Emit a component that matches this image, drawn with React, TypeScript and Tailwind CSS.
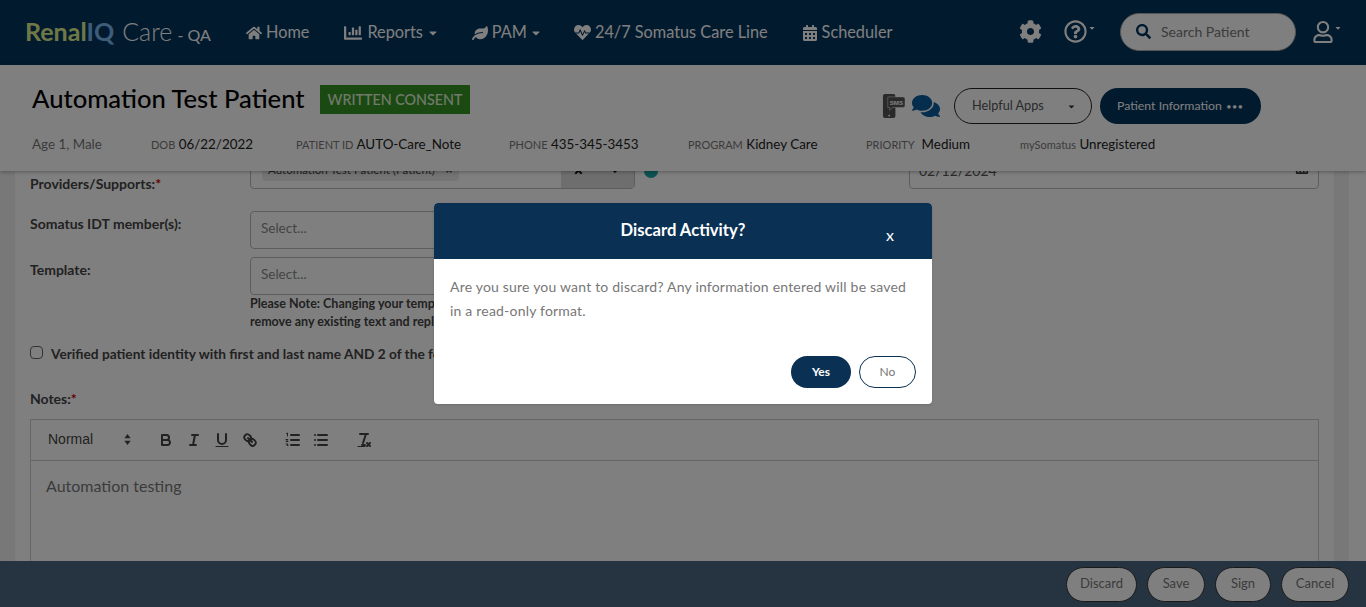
import type { ReactNode } from "react";
import {
  FaCalendarAlt,
  FaCaretDown,
  FaChartBar,
  FaCog,
  FaComments,
  FaHeartbeat,
  FaHome,
  FaLeaf,
  FaRegQuestionCircle,
  FaRegUser,
  FaSearch,
  FaTimes,
} from "react-icons/fa";

const BODY_FONT = "font-['Lato','Noto_Sans',sans-serif]";

function Caret() {
  return <FaCaretDown className="-ml-[1px] h-3 w-3" />;
}

function Header() {
  return (
    <header className="flex h-[65px] shrink-0 items-center bg-[#03345c] pb-[2px] pl-[25px] text-white">
      <div className="flex w-[221px] items-baseline whitespace-nowrap">
        <span className="text-[25px] font-bold text-[#dff08c]">Renal</span>
        <span className="text-[25px] font-bold text-[#7ab8f5]">IQ</span>
        <span className="ml-[8px] text-[25px] font-light">Care</span>
        <span className="ml-[5px] text-[16px]">- QA</span>
      </div>
      <nav className="mt-[2px] flex items-center text-[16.3px]">
        <a className="flex items-center gap-[4px]">
          <FaHome className="h-4 w-4" /> Home
        </a>
        <a className="ml-[35px] flex items-center gap-[5px]">
          <FaChartBar className="h-[18px] w-[18px]" /> Reports <Caret />
        </a>
        <a className="ml-[33px] flex items-center gap-[4px]">
          <FaLeaf className="h-4 w-4" /> PAM <Caret />
        </a>
        <a className="ml-[32px] flex items-center gap-[4px]">
          <FaHeartbeat className="h-[17px] w-[17px]" /> 24/7 Somatus Care Line
        </a>
        <a className="ml-[34px] flex items-center gap-[4px]">
          <FaCalendarAlt className="h-4 w-4" /> Scheduler
        </a>
      </nav>
      <div className="ml-auto flex items-center pr-[24px]">
        <FaCog className="h-[23px] w-[23px]" />
        <FaRegQuestionCircle className="ml-[22px] h-[23px] w-[23px]" />
        <FaCaretDown className="mb-2 ml-[1px] h-2 w-2" />
        <div className="ml-[24px] flex h-[38px] w-[176px] items-center rounded-full border border-[#aaa] bg-white pl-[15px]">
          <FaSearch className="h-[15px] w-[15px] text-[#03345c]" />
          <span className="ml-[10px] text-[14px] text-[#777]">Search Patient</span>
        </div>
        <FaRegUser className="ml-[16px] h-[22px] w-[22px]" />
        <FaCaretDown className="mb-2 h-2 w-2" />
      </div>
    </header>
  );
}

function SmsIcon() {
  return (
    <svg viewBox="0 0 24 26" className="h-[25px] w-[23px]" fill="#555">
      <rect x="1" y="0" width="13" height="25" rx="2" />
      <circle cx="7.500" cy="22.500" r="1" fill="#fff" />
      <path d="M6 3h16a2 2 0 0 1 2 2v7a2 2 0 0 1-2 2H11l-3 3v-3H6z" stroke="#fff" strokeWidth="0.5" />
      <text x="15" y="11" fontSize="6.500" fontWeight="700" fill="#fff" textAnchor="middle" fontFamily="Liberation Sans">
        SMS
      </text>
    </svg>
  );
}

function InfoItem({ label, value, className }: { label: string; value: string; className: string }) {
  return (
    <div className={`whitespace-nowrap ${className}`}>
      <span className="text-[11px] text-[#777]">{label}</span> <span className="text-[#222]">{value}</span>
    </div>
  );
}

function PatientBar() {
  return (
    <section className="relative z-10 h-[106px] shrink-0 bg-white pl-[32px] shadow-[0_1px_4px_rgba(0,0,0,0.3)]">
      <div className="flex h-[59px] items-start">
        <div className="mt-[20px] flex h-[29px] items-center">
          <h1 className="mb-[2px] w-[272px] whitespace-nowrap text-[25.6px] font-medium leading-none text-black">Automation Test Patient</h1>
          <span className="ml-[16px] flex h-[29px] w-[150px] items-center justify-center bg-[#349425] text-[14.3px] font-medium text-[#e4f2dc]">
            WRITTEN CONSENT
          </span>
        </div>
        <div className="ml-[412px] mt-[23px] flex h-[36px] items-center">
          <SmsIcon />
          <FaComments className="ml-[7px] h-[26px] w-[28px] text-[#0a5a9c]" />
          <button className="ml-[14px] flex h-[36px] w-[138px] items-center rounded-full border border-[#222] pl-[17px] text-[12.7px] text-[#555]">
            Helpful Apps
            <FaCaretDown className="ml-[23px] h-[9px] w-[9px] text-[#333]" />
          </button>
          <button className="ml-[8px] flex h-[36px] w-[161px] items-center justify-center rounded-full bg-[#03345c] text-[12.3px] text-white">
            Patient Information <span className="ml-[5px] text-[7px] tracking-[1.500px]">●●●</span>
          </button>
        </div>
      </div>
      <div className="mt-[11px] flex items-baseline text-[13.400px] leading-[18px]">
        <span className="w-[119px] text-[#777]">Age 1, Male</span>
        <InfoItem label="DOB" value="06/22/2022" className="w-[145px]" />
        <InfoItem label="PATIENT ID" value="AUTO-Care_Note" className="w-[213px]" />
        <InfoItem label="PHONE" value="435-345-3453" className="w-[179px]" />
        <InfoItem label="PROGRAM" value="Kidney Care" className="w-[178px]" />
        <InfoItem label="PRIORITY" value={"\u00A0Medium"} className="w-[154px]" />
        <InfoItem label="mySomatus" value="Unregistered" className="" />
      </div>
    </section>
  );
}

function Icon({ children }: { children: ReactNode }) {
  return (
    <svg viewBox="0 0 18 18" className="h-[18px] w-[18px]" fill="none" stroke="#444" strokeWidth="2" strokeLinecap="round" strokeLinejoin="round">
      {children}
    </svg>
  );
}

function Toolbar() {
  return (
    <div className="flex h-[41px] items-center border-b border-[#ccc] pl-[17px] font-['Liberation_Sans',sans-serif] text-[14px] text-[#444]">
      <span className="w-[76px]">Normal</span>
      <svg viewBox="0 0 8 14" className="h-[11px] w-[7px]" fill="#444">
        <path d="M4 0l4 5.500H0zM4 14L0 8.500h8z" />
      </svg>
      <div className="ml-[26px] flex gap-[10px]">
        <Icon>
          <path d="M5,4H9.500A2.500,2.500,0,0,1,12,6.500v0A2.500,2.500,0,0,1,9.500,9H5V4Z" />
          <path d="M5,9h5.500A2.500,2.500,0,0,1,13,11.500v0A2.500,2.500,0,0,1,10.500,14H5V9Z" />
        </Icon>
        <Icon>
          <path d="M7 4h6M5 14h6M8 14l2-10" />
        </Icon>
        <Icon>
          <path d="M5,3V9a4,4,0,0,0,4,4h0a4,4,0,0,0,4-4V3" />
          <path d="M3 15.500h12" strokeWidth="1" />
        </Icon>
        <Icon>
          <path d="M7 7l4 4" />
          <path d="M8.900,4.577a3.476,3.476,0,0,1,.36,4.679A3.476,3.476,0,0,1,4.577,8.900C3.185,7.500,2.035,6.400,4.217,4.217S7.500,3.185,8.900,4.577Z" />
          <path d="M13.423,9.100a3.476,3.476,0,0,0-4.679-.36,3.476,3.476,0,0,0,.36,4.679c1.392,1.392,2.500,2.542,4.679.36S14.815,10.500,13.423,9.100Z" />
        </Icon>
      </div>
      <div className="ml-[25px] flex gap-[10px]">
        <Icon>
          <path d="M7 4h8M7 9h8M7 14h8" />
          <path d="M2.500 2.500l1-.5v3M2 8.500h2l-2 2h2M2 13h2l-1 1.500h1" strokeWidth="1" />
        </Icon>
        <Icon>
          <path d="M6 4h9M6 9h9M6 14h9M3 4h0M3 9h0M3 14h0" />
        </Icon>
      </div>
      <div className="ml-[25px]">
        <Icon>
          <path d="M5 3h8M7 14h3M11 3l-3 9" />
          <path d="M3 15.500h7" strokeWidth="1" />
          <path d="M12 12l3 3M15 12l-3 3" />
        </Icon>
      </div>
    </div>
  );
}

function FormContent() {
  return (
    <main className="flex min-h-0 flex-1 overflow-hidden">
      <div className="w-[15px] shrink-0 bg-[#f0f0f0]" />
      <div className={`h-[800px] w-[1319px] shrink-0 bg-white pl-[15px] pr-[15px] ${BODY_FONT} text-[14px] text-[#444]`}>
        <div className="-mt-[20px] flex h-[38px]">
          <label className="w-[220px] pt-[22px] font-bold">
            Providers/Supports:<span className="text-[#c00]">*</span>
          </label>
          <div className="flex h-[38px] w-[385px] items-center justify-between rounded-b border border-[#bbb] pl-[11px]">
            <span className="flex h-[21px] w-[197px] items-center justify-between rounded-sm bg-[#eaeaea] px-[6px] text-[11.500px]">
              Automation Test Patient (Patient)
              <FaTimes className="h-2 w-2" />
            </span>
            <span className="flex h-full w-[73px] items-center justify-center gap-[24px] bg-[#ddd]">
              <FaTimes className="h-[11px] w-[11px] text-[#111]" />
              <FaCaretDown className="h-[14px] w-[14px] text-[#111]" />
            </span>
          </div>
          <span className="ml-[9px] mt-[13px] h-[14px] w-[14px] rounded-full bg-[#1aa6a6]" />
          <div className="ml-[251px] flex h-[38px] w-[410px] items-center justify-between rounded-b border border-[#bbb] px-[9px]">
            <span className="text-[#555]">02/12/2024</span>
            <FaCalendarAlt className="mb-[7px] h-[14px] w-[14px] text-[#444]" />
          </div>
        </div>

        <div className="mt-[22px] flex">
          <label className="w-[220px] pt-[2px] font-bold">Somatus IDT member(s):</label>
          <div className="flex h-[38px] w-[385px] items-center rounded border border-[#bbb] pb-[3px] pl-[10px] text-[13.500px] text-[#888]">Select...</div>
        </div>
        <div className="mt-[8px] flex">
          <label className="w-[220px] pt-[2px] font-bold">Template:</label>
          <div className="flex h-[38px] w-[385px] items-center rounded border border-[#bbb] pb-[3px] pl-[10px] text-[13.500px] text-[#888]">Select...</div>
        </div>
        <p className="ml-[220px] whitespace-nowrap text-[12.500px] font-bold leading-[18px]">
          Please Note: Changing your template will
          <br />
          remove any existing text and replace it
        </p>

        <label className="mt-[13px] flex items-center font-bold">
          <span className="mb-[3px] h-[13px] w-[13px] rounded-sm border border-[#666] bg-white" />
          <span className="ml-[8px] whitespace-nowrap text-[13.7px]">Verified patient identity with first and last name AND 2 of the following</span>
        </label>

        <p className="mt-[23px] font-bold">
          Notes:<span className="text-[#c00]">*</span>
        </p>
        <div className="mt-[10px] h-[300px] border border-[#ccc]">
          <Toolbar />
          <p className="pl-[15px] pt-[13px] text-[16px] text-[#777]">Automation testing</p>
        </div>
      </div>
      <div className="w-[15px] shrink-0 bg-[#f0f0f0]" />
    </main>
  );
}

function Footer() {
  return (
    <footer className={`absolute inset-x-0 bottom-0 flex h-[46px] items-center justify-end gap-[10px] bg-[#41607a]/95 pr-[17px] ${BODY_FONT}`}>
      {[
        ["Discard", "w-[71px]"],
        ["Save", "w-[58px]"],
        ["Sign", "w-[56px]"],
        ["Cancel", "w-[68px]"],
      ].map(([label, width]) => (
        <button key={label} className={`h-[35px] rounded-full border border-[#333] bg-white text-[13px] text-[#777] ${width}`}>
          {label}
        </button>
      ))}
    </footer>
  );
}

function DiscardModal() {
  return (
    <div className="absolute inset-0 z-20 bg-black/50">
      <div className={`absolute left-[434px] top-[203px] w-[498px] overflow-hidden rounded bg-white shadow ${BODY_FONT}`}>
        <div className="relative flex h-[56px] items-center justify-center bg-[#0a3154] text-white">
          <span className="mb-[2px] text-[16.600px] font-bold">Discard Activity?</span>
          <span className="absolute left-[452px] top-[20px] text-[16px]">x</span>
        </div>
        <div className="h-[145px] px-[16px] pt-[16px]">
          <p className="text-[14px] leading-[24px] tracking-[0.2px] text-[#777]">
            Are you sure you want to discard? Any information entered will be saved in a read-only format.
          </p>
          <div className="mt-[33px] flex justify-end gap-[8px]">
            <button className="h-[32px] w-[60px] rounded-full bg-[#0a3154] text-[12px] font-bold text-white">Yes</button>
            <button className="h-[32px] w-[57px] rounded-full border border-[#0a3154] text-[12px] text-[#777]">No</button>
          </div>
        </div>
      </div>
    </div>
  );
}

export default function App() {
  return (
    <div className={`relative flex h-[607px] w-full flex-col overflow-hidden bg-white ${BODY_FONT}`}>
      <Header />
      <PatientBar />
      <FormContent />
      <Footer />
      <DiscardModal />
    </div>
  );
}
